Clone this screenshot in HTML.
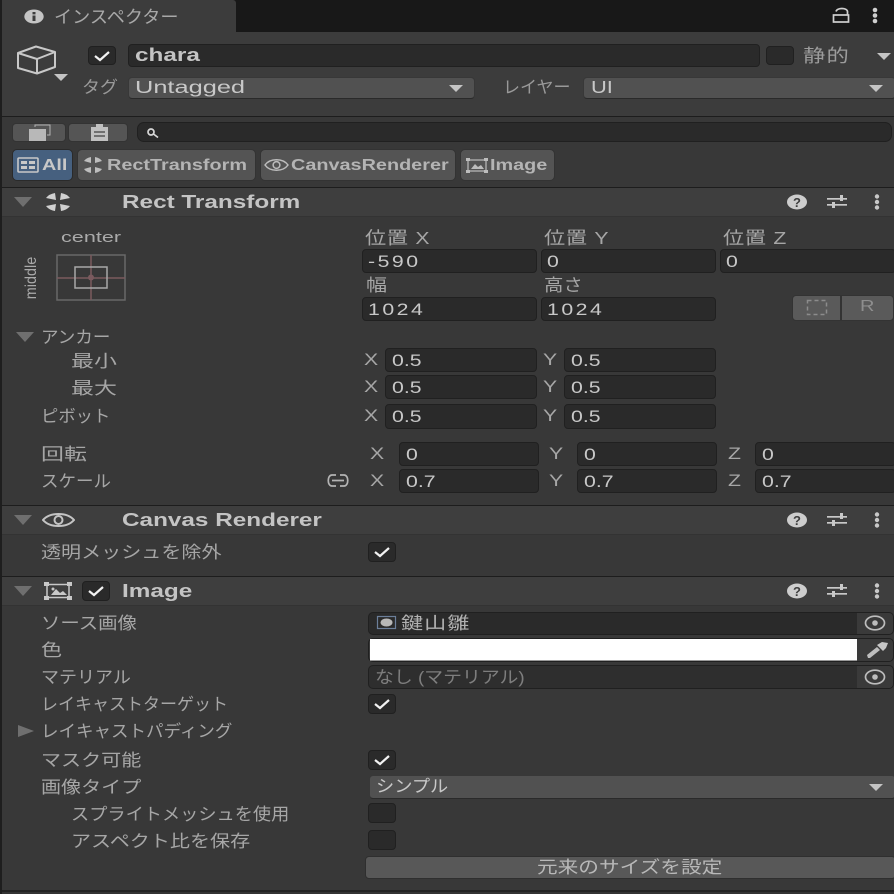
<!DOCTYPE html>
<html lang="ja"><head><meta charset="utf-8"><style>
html,body{margin:0;padding:0;background:#383838}
#r{position:relative;width:894px;height:894px;overflow:hidden;background:#383838;font-family:"Liberation Sans","Noto Sans CJK JP",sans-serif}
#r div,#r svg{position:absolute}
.t{white-space:nowrap;font-size:17px;line-height:20px;color:#a6a6a6;transform-origin:left center}
.w{display:inline-block;transform:scaleX(1.25);transform-origin:left center}
.n{letter-spacing:2px}
.f{box-sizing:border-box;background:#2a2a2a;border:1px solid #202020;border-radius:4px}
.d{box-sizing:border-box;background:#515151;border:1px solid #383838;border-bottom-color:#2a2a2a;border-radius:4px}
.b{box-sizing:border-box;background:#555;border:1px solid #333;border-radius:4px}
.h{left:2px;width:892px;height:28px;background:#3e3e3e}
.l{left:2px;width:892px;height:1px;background:#1d1d1d}
.v{color:#c8c8c8}
.bo{font-weight:bold;color:#c4c4c4}
.bo .w{transform:scaleX(1.35)}
.tg{font-size:15.5px;font-weight:bold;color:#b4b4b4}
.tg .w{transform:scaleX(1.28)}
.ar{width:0;height:0;border-left:7px solid transparent;border-right:7px solid transparent;border-top:7px solid #c4c4c4}
.fo{width:0;height:0;border-left:9px solid transparent;border-right:9px solid transparent;border-top:10px solid #6f6f6f}
</style></head><body><div id="r">

<!-- frame / top -->
<div style="left:0;top:0;width:2px;height:894px;background:#1e1e1e"></div>
<div style="left:2px;top:0;width:892px;height:32px;background:#181818"></div>
<div style="left:2px;top:0;width:234px;height:32px;background:#3c3c3c;border-radius:0 3px 0 0"></div>
<div style="left:2px;top:32px;width:892px;height:84px;background:#3c3c3c"></div>
<div class="l" style="top:116px"></div>
<div class="l" style="top:187px"></div>

<svg style="left:24px;top:9px" width="20" height="15" viewBox="0 0 20 15"><ellipse cx="10" cy="7.500" rx="9.700" ry="7" fill="#c4c4c4"/><rect x="8.500" y="6.500" width="3" height="5.500" fill="#3c3c3c"/><rect x="8.500" y="3" width="3" height="2.400" fill="#3c3c3c"/></svg>
<div class="t" style="left:54px;top:7px;font-size:17.6px;color:#a8a8a8;transform:scaleX(1.03)">インスペクター</div>

<svg style="left:832px;top:6px" width="18" height="18" viewBox="0 0 18 18" fill="none" stroke="#d0d0d0" stroke-width="1.700"><path d="M4 5.500C5 1.500 15 1.500 15.500 5.500V9"/><rect x="1.500" y="9" width="15" height="7"/></svg>
<svg style="left:870px;top:7px" width="10" height="17" viewBox="0 0 10 17" fill="#cfcfcf"><circle cx="5" cy="3" r="2.300"/><circle cx="5" cy="8.500" r="2.300"/><circle cx="5" cy="14" r="2.300"/></svg>

<!-- object header -->
<svg style="left:15px;top:44px" width="44" height="32" viewBox="0 0 44 32" fill="none" stroke="#c8c8c8" stroke-width="2" stroke-linejoin="round"><path d="M3 9L21 2.500L40 8V23L22 29.500L3 24Z"/><path d="M3 9L22 15L40 8M22 15V29.500"/></svg>
<div class="ar" style="left:54px;top:74px"></div>

<div class="f" style="left:88px;top:46px;width:28px;height:19px"></div>
<svg style="left:92px;top:48px" width="20" height="15" viewBox="0 0 20 15" fill="none" stroke="#f2f2f2" stroke-width="2.200"><path d="M3 8L8 12L17 4"/></svg>
<div class="f" style="left:128px;top:44px;width:632px;height:23px"></div>
<div class="t bo" style="left:135px;top:45px;font-size:18px"><span class="w">chara</span></div>
<div class="f" style="left:766px;top:46px;width:28px;height:19px"></div>
<div class="t" style="left:803px;top:46px;font-size:18px;color:#9c9c9c;letter-spacing:1px;transform:scaleX(1.24)">静的</div>
<div class="ar" style="left:877px;top:53px"></div>

<div class="t" style="left:82px;top:78px;color:#999;transform:scaleX(1.06)">タグ</div>
<div class="d" style="left:128px;top:77px;width:347px;height:22px"></div>
<div class="t v" style="left:135px;top:77px;font-size:17.500px"><span class="w" style="transform:scaleX(1.45)">Untagged</span></div>
<div class="ar" style="left:449px;top:85px"></div>
<div class="t" style="left:503px;top:78px;color:#999">レイヤー</div>
<div class="d" style="left:583px;top:77px;width:313px;height:22px"></div>
<div class="t v" style="left:591px;top:77px;font-size:17.500px"><span class="w">UI</span></div>
<div class="ar" style="left:869px;top:85px"></div>

<!-- toolbar -->
<div class="b" style="left:12px;top:123px;width:54px;height:19px"></div>
<div class="b" style="left:68px;top:123px;width:60px;height:19px"></div>
<svg style="left:28px;top:124px" width="24" height="17" viewBox="0 0 24 17"><path d="M7 3V1H22V11H19" fill="none" stroke="#b4b4b4" stroke-width="1"/><rect x="1" y="5" width="17" height="12" fill="#b8b8b8"/></svg>
<svg style="left:90px;top:124px" width="20" height="17" viewBox="0 0 20 17"><rect x="1" y="3" width="17" height="14" fill="#c0c0c0"/><rect x="6" y="0" width="7" height="4" fill="#c0c0c0"/><path d="M4 8H15M4 12H15" stroke="#555" stroke-width="1.500"/></svg>
<div class="f" style="left:137px;top:122px;width:755px;height:20px;border-radius:7px"></div>
<svg style="left:145px;top:127px" width="16" height="12" viewBox="0 0 16 12" fill="none" stroke="#d8d8d8" stroke-width="1.700"><circle cx="6" cy="5" r="3"/><path d="M8.500 7L13 10.500"/></svg>

<div class="b" style="left:12px;top:149px;width:61px;height:32px;background:#46607f;border-color:#2a2a2a;border-radius:5px"></div>
<svg style="left:17px;top:157px" width="22" height="16" viewBox="0 0 22 16" fill="none" stroke="#c8c8c8" stroke-width="1.600"><rect x="1" y="1" width="20" height="14" rx="1"/><rect x="4" y="4" width="6" height="3" fill="#c8c8c8" stroke="none"/><rect x="12" y="4" width="6" height="3" fill="#c8c8c8" stroke="none"/><rect x="4" y="9" width="6" height="3" fill="#c8c8c8" stroke="none"/><rect x="12" y="9" width="6" height="3" fill="#c8c8c8" stroke="none"/></svg>
<div class="t tg" style="left:42px;top:156px;color:#c8c8c8"><span class="w">All</span></div>

<div class="b" style="left:77px;top:149px;width:179px;height:32px;background:#545454;border-radius:5px"></div>
<svg style="left:83px;top:157px" width="20" height="16" viewBox="0 0 20 16" fill="#bdbdbd"><path d="M1 4Q3 1 8 0L8 6ZM19 4Q17 1 12 0L12 6ZM1 12Q3 15 8 16L8 10ZM19 12Q17 15 12 16L12 10Z"/></svg>
<div class="t tg" style="left:107px;top:156px"><span class="w">RectTransform</span></div>

<div class="b" style="left:260px;top:149px;width:196px;height:32px;background:#545454;border-radius:5px"></div>
<svg style="left:264px;top:157px" width="25" height="16" viewBox="0 0 25 16" fill="none" stroke="#bdbdbd" stroke-width="1.500"><path d="M1 8C6 1 19 1 24 8C19 15 6 15 1 8Z"/><circle cx="12.500" cy="8" r="3.400"/></svg>
<div class="t tg" style="left:291px;top:156px"><span class="w">CanvasRenderer</span></div>

<div class="b" style="left:460px;top:149px;width:95px;height:32px;background:#545454;border-radius:5px"></div>
<svg style="left:466px;top:158px" width="22" height="15" viewBox="0 0 22 15"><rect x="2" y="2" width="18" height="11" fill="none" stroke="#bdbdbd" stroke-width="1.200"/><path d="M5 11L9 6L12 9L15 7L18 11Z" fill="#bdbdbd"/><rect x="0" y="0" width="4" height="3" fill="#bdbdbd"/><rect x="18" y="0" width="4" height="3" fill="#bdbdbd"/><rect x="0" y="12" width="4" height="3" fill="#bdbdbd"/><rect x="18" y="12" width="4" height="3" fill="#bdbdbd"/></svg>
<div class="t tg" style="left:490px;top:156px"><span class="w">Image</span></div>

<!-- Rect Transform -->
<div class="h" style="top:188px"></div>
<div class="l" style="top:216px;background:#333"></div>
<div class="fo" style="left:14px;top:197px"></div>
<svg style="left:45px;top:193px" width="26" height="18" viewBox="0 0 26 18" fill="#d0d0d0"><path d="M1 5Q4 1 10 0L11 7ZM25 5Q22 1 16 0L15 7ZM1 13Q4 17 10 18L11 11ZM25 13Q22 17 16 18L15 11Z"/></svg>
<div class="t bo" style="left:122px;top:192px;font-size:18px"><span class="w">Rect Transform</span></div>
<svg style="left:786px;top:194px" width="22" height="16" viewBox="0 0 22 16"><ellipse cx="11" cy="8" rx="10" ry="7.500" fill="#cdcdcd"/><text x="11" y="13" text-anchor="middle" font-family="Liberation Sans" font-size="13" font-weight="bold" fill="#3e3e3e">?</text></svg>
<svg style="left:826px;top:193px" width="22" height="18" viewBox="0 0 22 18" fill="#c8c8c8"><rect x="1" y="5" width="20" height="1.700"/><rect x="1" y="11" width="20" height="1.700"/><rect x="14" y="2" width="3" height="6"/><rect x="6" y="9" width="3" height="6"/></svg>
<svg style="left:872px;top:194px" width="10" height="16" viewBox="0 0 10 16" fill="#c8c8c8"><circle cx="5" cy="2.500" r="2.200"/><circle cx="5" cy="8" r="2.200"/><circle cx="5" cy="13.500" r="2.200"/></svg>

<div class="t" style="left:61px;top:228px;font-size:15px;color:#aaa"><span class="w" style="transform:scaleX(1.44)">center</span></div>
<div class="t" style="left:4px;top:268px;width:56px;text-align:center;font-size:15.500px;color:#aaa;transform-origin:center;transform:rotate(-90deg) scaleX(.93)">middle</div>
<svg style="left:56px;top:254px" width="70" height="48" viewBox="0 0 70 48" fill="none"><rect x="1" y="1" width="68" height="45" stroke="#686868" stroke-width="1.500"/><path d="M35 1V46M1 24H69" stroke="#7a5a5e" stroke-width="1.500"/><rect x="19" y="13" width="32" height="21" stroke="#a8a8a8" stroke-width="1.500"/><circle cx="35" cy="23.500" r="3" fill="#7a5a5e"/></svg>

<div class="t" style="left:365px;top:228px;font-size:17.500px;letter-spacing:.6px;transform:scaleX(1.21)">位置 <span style="display:inline-block">X</span></div>
<div class="t" style="left:544px;top:228px;font-size:17.500px;letter-spacing:.6px;transform:scaleX(1.21)">位置 <span style="display:inline-block">Y</span></div>
<div class="t" style="left:723px;top:228px;font-size:17.500px;letter-spacing:.6px;transform:scaleX(1.21)">位置 <span style="display:inline-block">Z</span></div>
<div class="f" style="left:362px;top:249px;width:175px;height:24px"></div>
<div class="f" style="left:541px;top:249px;width:175px;height:24px"></div>
<div class="f" style="left:720px;top:249px;width:176px;height:24px"></div>
<div class="t v" style="left:368px;top:252px"><span class="w n">-590</span></div>
<div class="t v" style="left:547px;top:252px"><span class="w">0</span></div>
<div class="t v" style="left:726px;top:252px"><span class="w">0</span></div>

<div class="t" style="left:366px;top:276px;transform:scaleX(1.24)">幅</div>
<div class="t" style="left:544px;top:276px;transform:scaleX(1.14)">高さ</div>
<div class="f" style="left:362px;top:297px;width:175px;height:24px"></div>
<div class="f" style="left:541px;top:297px;width:175px;height:24px"></div>
<div class="t v" style="left:368px;top:300px"><span class="w n">1024</span></div>
<div class="t v" style="left:547px;top:300px"><span class="w n">1024</span></div>

<div class="b" style="left:792px;top:295px;width:49px;height:26px;background:#5a5a5a;border-radius:4px 0 0 4px"></div>
<div class="b" style="left:841px;top:295px;width:53px;height:26px;background:#5a5a5a;border-radius:0 4px 4px 0"></div>
<svg style="left:806px;top:299px" width="22" height="17" viewBox="0 0 22 17" fill="none" stroke="#8c8c8c" stroke-width="1.500" stroke-dasharray="4 3"><rect x="1.500" y="1.500" width="19" height="14"/></svg>
<div class="t" style="left:860px;top:297px;font-size:16px;color:#8e8e8e"><span class="w">R</span></div>

<div class="fo" style="left:16px;top:332px"></div>
<div class="t" style="left:41px;top:328px;transform:scaleX(1.03)">アンカー</div>
<div class="t" style="left:71px;top:352px;transform:scaleX(1.35)">最小</div>
<div class="t" style="left:71px;top:379px;transform:scaleX(1.35)">最大</div>
<div class="t" style="left:41px;top:407px;transform:scaleX(1.02)">ピボット</div>

<div class="t" style="left:364px;top:350px"><span class="w">X</span></div>
<div class="f" style="left:385px;top:348px;width:152px;height:24px"></div>
<div class="t v" style="left:392px;top:351px"><span class="w">0.5</span></div>
<div class="t" style="left:543px;top:350px"><span class="w">Y</span></div>
<div class="f" style="left:564px;top:348px;width:152px;height:24px"></div>
<div class="t v" style="left:571px;top:351px"><span class="w">0.5</span></div>

<div class="t" style="left:364px;top:377px"><span class="w">X</span></div>
<div class="f" style="left:385px;top:375px;width:152px;height:24px"></div>
<div class="t v" style="left:392px;top:378px"><span class="w">0.5</span></div>
<div class="t" style="left:543px;top:377px"><span class="w">Y</span></div>
<div class="f" style="left:564px;top:375px;width:152px;height:24px"></div>
<div class="t v" style="left:571px;top:378px"><span class="w">0.5</span></div>

<div class="t" style="left:364px;top:406px"><span class="w">X</span></div>
<div class="f" style="left:385px;top:404px;width:152px;height:25px"></div>
<div class="t v" style="left:392px;top:407px"><span class="w">0.5</span></div>
<div class="t" style="left:543px;top:406px"><span class="w">Y</span></div>
<div class="f" style="left:564px;top:404px;width:152px;height:25px"></div>
<div class="t v" style="left:571px;top:407px"><span class="w">0.5</span></div>

<div class="t" style="left:41px;top:445px;transform:scaleX(1.35)">回転</div>
<div class="t" style="left:41px;top:472px;transform:scaleX(1.03)">スケール</div>
<svg style="left:325px;top:473px" width="26" height="15" viewBox="0 0 26 15" fill="none" stroke="#b4b4b4" stroke-width="1.700"><path d="M11 2H7C2 2 2 13 7 13H11M15 2H19C24 2 24 13 19 13H15M7 7.500H19"/></svg>

<div class="t" style="left:370px;top:444px"><span class="w">X</span></div>
<div class="f" style="left:399px;top:442px;width:140px;height:24px"></div>
<div class="t v" style="left:406px;top:445px"><span class="w">0</span></div>
<div class="t" style="left:549px;top:444px"><span class="w">Y</span></div>
<div class="f" style="left:577px;top:442px;width:140px;height:24px"></div>
<div class="t v" style="left:584px;top:445px"><span class="w">0</span></div>
<div class="t" style="left:728px;top:444px"><span class="w">Z</span></div>
<div class="f" style="left:755px;top:442px;width:141px;height:24px"></div>
<div class="t v" style="left:762px;top:445px"><span class="w">0</span></div>

<div class="t" style="left:370px;top:471px"><span class="w">X</span></div>
<div class="f" style="left:399px;top:469px;width:140px;height:24px"></div>
<div class="t v" style="left:406px;top:472px"><span class="w">0.7</span></div>
<div class="t" style="left:549px;top:471px"><span class="w">Y</span></div>
<div class="f" style="left:577px;top:469px;width:140px;height:24px"></div>
<div class="t v" style="left:584px;top:472px"><span class="w">0.7</span></div>
<div class="t" style="left:728px;top:471px"><span class="w">Z</span></div>
<div class="f" style="left:755px;top:469px;width:141px;height:24px"></div>
<div class="t v" style="left:762px;top:472px"><span class="w">0.7</span></div>

<!-- Canvas Renderer -->
<div class="l" style="top:505px"></div>
<div class="h" style="top:506px"></div>
<div class="l" style="top:534px;background:#333"></div>
<div class="fo" style="left:14px;top:515px"></div>
<svg style="left:42px;top:511px" width="33" height="18" viewBox="0 0 33 18" fill="none" stroke="#c4c4c4" stroke-width="2"><path d="M1 9C8 1 25 1 32 9C25 17 8 17 1 9Z"/><circle cx="16.500" cy="9" r="4"/></svg>
<div class="t bo" style="left:122px;top:510px;font-size:18px"><span class="w">Canvas Renderer</span></div>
<svg style="left:786px;top:512px" width="22" height="16" viewBox="0 0 22 16"><ellipse cx="11" cy="8" rx="10" ry="7.500" fill="#cdcdcd"/><text x="11" y="13" text-anchor="middle" font-family="Liberation Sans" font-size="13" font-weight="bold" fill="#3e3e3e">?</text></svg>
<svg style="left:826px;top:511px" width="22" height="18" viewBox="0 0 22 18" fill="#c8c8c8"><rect x="1" y="5" width="20" height="1.700"/><rect x="1" y="11" width="20" height="1.700"/><rect x="14" y="2" width="3" height="6"/><rect x="6" y="9" width="3" height="6"/></svg>
<svg style="left:872px;top:512px" width="10" height="16" viewBox="0 0 10 16" fill="#c8c8c8"><circle cx="5" cy="2.500" r="2.200"/><circle cx="5" cy="8" r="2.200"/><circle cx="5" cy="13.500" r="2.200"/></svg>
<div class="t" style="left:41px;top:543px;transform:scaleX(1.18)">透明メッシュを除外</div>
<div class="f" style="left:368px;top:542px;width:28px;height:20px"></div>
<svg style="left:372px;top:544px" width="20" height="15" viewBox="0 0 20 15" fill="none" stroke="#f2f2f2" stroke-width="2.200"><path d="M3 8L8 12L17 4"/></svg>

<!-- Image -->
<div class="l" style="top:576px"></div>
<div class="h" style="top:577px"></div>
<div class="l" style="top:605px;background:#333"></div>
<div class="fo" style="left:14px;top:586px"></div>
<svg style="left:44px;top:582px" width="28" height="18" viewBox="0 0 28 18"><rect x="3" y="2.500" width="22" height="13" fill="none" stroke="#c8c8c8" stroke-width="1.500"/><path d="M7 13L12 7L16 11L19 9L23 13Z" fill="#c8c8c8"/><circle cx="9" cy="7" r="1.500" fill="#c8c8c8"/><rect x="0" y="0" width="5" height="4" fill="#c8c8c8"/><rect x="23" y="0" width="5" height="4" fill="#c8c8c8"/><rect x="0" y="14" width="5" height="4" fill="#c8c8c8"/><rect x="23" y="14" width="5" height="4" fill="#c8c8c8"/></svg>
<div class="f" style="left:82px;top:581px;width:28px;height:20px"></div>
<svg style="left:86px;top:583px" width="20" height="15" viewBox="0 0 20 15" fill="none" stroke="#f2f2f2" stroke-width="2.200"><path d="M3 8L8 12L17 4"/></svg>
<div class="t bo" style="left:122px;top:581px;font-size:18px"><span class="w">Image</span></div>
<svg style="left:786px;top:583px" width="22" height="16" viewBox="0 0 22 16"><ellipse cx="11" cy="8" rx="10" ry="7.500" fill="#cdcdcd"/><text x="11" y="13" text-anchor="middle" font-family="Liberation Sans" font-size="13" font-weight="bold" fill="#3e3e3e">?</text></svg>
<svg style="left:826px;top:582px" width="22" height="18" viewBox="0 0 22 18" fill="#c8c8c8"><rect x="1" y="5" width="20" height="1.700"/><rect x="1" y="11" width="20" height="1.700"/><rect x="14" y="2" width="3" height="6"/><rect x="6" y="9" width="3" height="6"/></svg>
<svg style="left:872px;top:583px" width="10" height="16" viewBox="0 0 10 16" fill="#c8c8c8"><circle cx="5" cy="2.500" r="2.200"/><circle cx="5" cy="8" r="2.200"/><circle cx="5" cy="13.500" r="2.200"/></svg>

<div class="t" style="left:41px;top:614px;transform:scaleX(1.14)">ソース画像</div>
<div class="t" style="left:41px;top:641px;transform:scaleX(1.24)">色</div>
<div class="t" style="left:41px;top:668px;transform:scaleX(1.06)">マテリアル</div>
<div class="t" style="left:41px;top:695px">レイキャストターゲット</div>
<div class="t" style="left:41px;top:722px;transform:scaleX(1.03)">レイキャストパディング</div>
<div class="t" style="left:41px;top:751px;transform:scaleX(1.18)">マスク可能</div>
<div class="t" style="left:41px;top:778px;transform:scaleX(1.18)">画像タイプ</div>
<div class="t" style="left:71px;top:805px;transform:scaleX(1.07)">スプライトメッシュを使用</div>
<div class="t" style="left:71px;top:832px;transform:scaleX(1.18)">アスペクト比を保存</div>
<svg style="left:18px;top:724px" width="16" height="14" viewBox="0 0 16 14"><path d="M0 1L16 7L0 13Z" fill="#6f6f6f"/></svg>

<div class="f" style="left:368px;top:612px;width:526px;height:23px;border-radius:5px"></div>
<div style="left:857px;top:613px;width:36px;height:21px;background:#3a3a3a;border-radius:0 4px 4px 0"></div>
<svg style="left:376px;top:615px" width="21" height="15" viewBox="0 0 21 15"><rect x="1.500" y="1.500" width="18" height="12" fill="#2a2a2a" stroke="#6c7f9a" stroke-width="1.200"/><ellipse cx="10.500" cy="7.500" rx="6" ry="4" fill="#b8b8b8"/></svg>
<div class="t" style="left:401px;top:614px;color:#b0b0b0;letter-spacing:.8px;transform:scaleX(1.3)">鍵山雛</div>
<svg style="left:864px;top:614px" width="22" height="18" viewBox="0 0 22 18" fill="none"><ellipse cx="11" cy="9" rx="9.500" ry="6.800" stroke="#bdbdbd" stroke-width="1.700"/><circle cx="11" cy="9" r="2.800" fill="#bdbdbd"/></svg>

<div class="f" style="left:368px;top:638px;width:526px;height:24px;background:#3a3a3a;border-radius:5px"></div>
<div style="left:370px;top:639px;width:487px;height:21px;background:#fff;border-bottom:1px solid #999"></div>
<svg style="left:866px;top:641px" width="23" height="18" viewBox="0 0 23 18"><path d="M2 17L1 14L11 6L14 9L4 17Z" fill="#bdbdbd"/><path d="M11 4L16 1L22 2L20 7L17 10Z" fill="#c8c8c8"/></svg>

<div class="f" style="left:368px;top:665px;width:526px;height:24px;background:#2e2e2e;border-radius:5px"></div>
<div style="left:857px;top:666px;width:36px;height:22px;background:#3a3a3a;border-radius:0 4px 4px 0"></div>
<div class="t" style="left:375px;top:668px;color:#7e7e7e;transform:scaleX(1.11)">なし (マテリアル)</div>
<svg style="left:864px;top:668px" width="22" height="18" viewBox="0 0 22 18" fill="none"><ellipse cx="11" cy="9" rx="9.500" ry="6.800" stroke="#bdbdbd" stroke-width="1.700"/><circle cx="11" cy="9" r="2.800" fill="#bdbdbd"/></svg>

<div class="f" style="left:368px;top:694px;width:28px;height:20px"></div>
<svg style="left:372px;top:696px" width="20" height="15" viewBox="0 0 20 15" fill="none" stroke="#f2f2f2" stroke-width="2.200"><path d="M3 8L8 12L17 4"/></svg>
<div class="f" style="left:368px;top:750px;width:28px;height:20px"></div>
<svg style="left:372px;top:752px" width="20" height="15" viewBox="0 0 20 15" fill="none" stroke="#f2f2f2" stroke-width="2.200"><path d="M3 8L8 12L17 4"/></svg>

<div class="d" style="left:369px;top:775px;width:527px;height:24px"></div>
<div class="t v" style="left:376px;top:777px;transform:scaleX(1.07)">シンプル</div>
<div class="ar" style="left:869px;top:784px"></div>

<div class="f" style="left:368px;top:803px;width:28px;height:20px"></div>
<div class="f" style="left:368px;top:830px;width:28px;height:20px"></div>

<div class="b" style="left:365px;top:856px;width:531px;height:23px;background:#585858;border-color:#2f2f2f"></div>
<div class="t" style="left:537px;top:857px;color:#b8b8b8;font-size:17.300px;transform:scaleX(1.195)">元来のサイズを設定</div>

<div class="l" style="top:890px;height:2px;background:#222"></div>
<div style="left:2px;top:892px;width:892px;height:2px;background:#333"></div>

</div></body></html>
